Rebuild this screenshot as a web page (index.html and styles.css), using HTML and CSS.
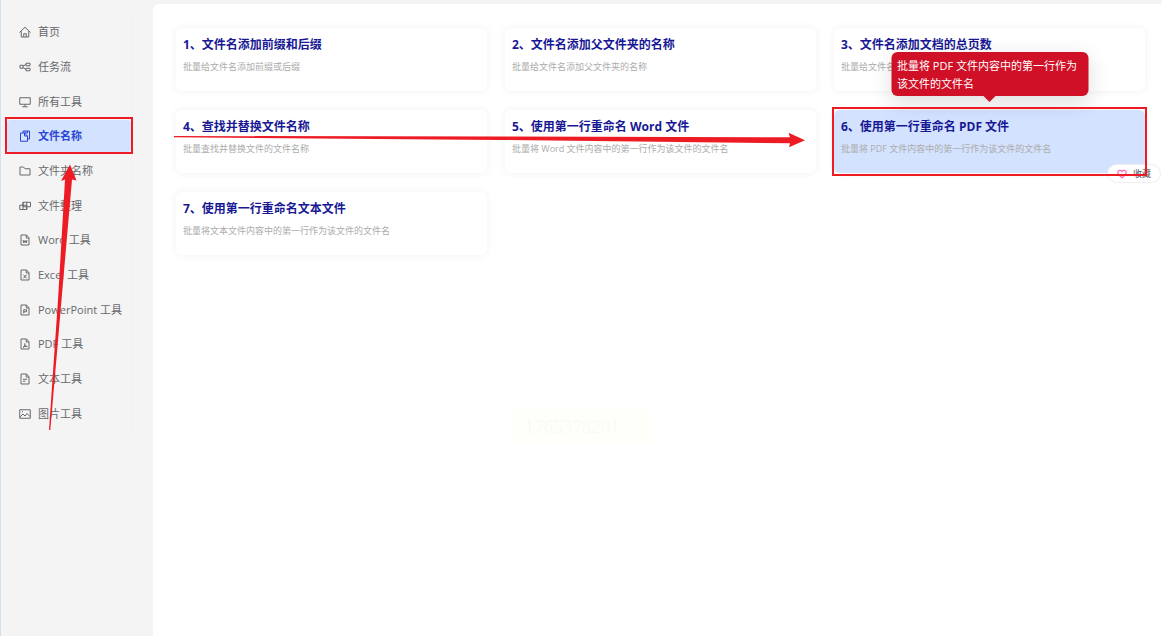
FILE: index.html
```html
<!DOCTYPE html>
<html lang="zh-CN">
<head>
  <meta charset="UTF-8">
  <meta name="viewport" content="width=device-width, initial-scale=1.0">
  <title>文件名称</title>
  <link rel="stylesheet" href="styles.css">
</head>
<body>
  <div class="app">
    <aside class="sidebar">
      <nav class="menu">
        <a class="menu-item" href="#"><span>
          <svg class="icon" viewBox="0 0 24 24"><path d="M1 13 12 2.500 23 13M4.500 10.500V22h15V10.500M9.500 22v-6.500h5V22"/></svg>首页</span></a>
        <a class="menu-item" href="#"><span>
          <svg class="icon" viewBox="0 0 24 24"><path d="M2 8.500h6v6H2zM14 4.500h8v5h-8zM14 14.500h8v5h-8zM8 10l6-3M8 13l6 4"/></svg>任务流</span></a>
        <a class="menu-item" href="#"><span>
          <svg class="icon" viewBox="0 0 24 24"><path d="M1.500 3.500h21v13h-21zM12 16.500V21M6.500 21.500h11"/></svg>所有工具</span></a>
        <a class="menu-item active" href="#"><span>
          <svg class="icon" viewBox="0 0 24 24"><path d="M8 6V2h13v16h-4M3 6h8l6 6v10.500H3zM11 6v6h6M12 2v4h5V2"/></svg>文件名称</span></a>
        <a class="menu-item" href="#"><span>
          <svg class="icon" viewBox="0 0 24 24"><path d="M2 4h7l3 3.500h10V20H2z"/></svg>文件夹名称</span></a>
        <a class="menu-item" href="#"><span>
          <svg class="icon" viewBox="0 0 24 24"><path d="M8 4.500h15v9H8zM15.500 4.500V19M1.500 10.500h14V19h-14zM8 4.500V19"/></svg>文件整理</span></a>
        <a class="menu-item" href="#"><span>
          <svg class="icon" viewBox="0 0 24 24"><path d="M4 2h11l5 5.500V22H4zM14.500 2v6H20M8 12l1.500 6 2.500-5 2.500 5 1.500-6"/></svg>Word 工具</span></a>
        <a class="menu-item" href="#"><span>
          <svg class="icon" viewBox="0 0 24 24"><path d="M4 2h11l5 5.500V22H4zM14.500 2v6H20M9 11.500l6 7M15 11.500l-6 7"/></svg>Excel 工具</span></a>
        <a class="menu-item" href="#"><span>
          <svg class="icon" viewBox="0 0 24 24"><path d="M4 2h11l5 5.500V22H4zM14.500 2v6H20M9.500 19v-7.500h5.500v4H9.500"/></svg>PowerPoint 工具</span></a>
        <a class="menu-item" href="#"><span>
          <svg class="icon" viewBox="0 0 24 24"><path d="M4 2h11l5 5.500V22H4zM14.500 2v6H20M11.500 10.500c1 4-1 7-3.500 8.500M11.500 13c1 3 2.500 4 5 4-3-.5-6 0-8 1.500"/></svg>PDF 工具</span></a>
        <a class="menu-item" href="#"><span>
          <svg class="icon" viewBox="0 0 24 24"><path d="M4 2h11l5 5.500V22H4zM14.500 2v6H20M8 12.500h8M8 16.500h4.500"/></svg>文本工具</span></a>
        <a class="menu-item" href="#"><span>
          <svg class="icon" viewBox="0 0 24 24"><path d="M1.500 3.500h21v17h-21zM2 18l6-6 4 4 4-5 6 6M6 7.500h2"/></svg>图片工具</span></a>
      </nav>
    </aside>

    <main class="content">
      <div class="cards">
        <section class="card">
          <h3>1、文件名添加前缀和后缀</h3>
          <p>批量给文件名添加前缀或后缀</p>
        </section>
        <section class="card">
          <h3>2、文件名添加父文件夹的名称</h3>
          <p>批量给文件名添加父文件夹的名称</p>
        </section>
        <section class="card">
          <h3>3、文件名添加文档的总页数</h3>
          <p>批量给文件名添加文档的总页数</p>
        </section>
        <section class="card">
          <h3>4、查找并替换文件名称</h3>
          <p>批量查找并替换文件的文件名称</p>
        </section>
        <section class="card">
          <h3>5、使用第一行重命名 Word 文件</h3>
          <p>批量将 Word 文件内容中的第一行作为该文件的文件名</p>
        </section>
        <section class="card selected">
          <h3>6、使用第一行重命名 PDF 文件</h3>
          <p>批量将 PDF 文件内容中的第一行作为该文件的文件名</p>
          <div class="tooltip" role="tooltip">批量将 PDF 文件内容中的第一行作为该文件的文件名</div>
          <button class="favorite" type="button">
            <svg class="heart" viewBox="0 0 24 24"><path d="M12 21C7 17 2 13 2 8.500 2 3 9 1.500 12 6c3-4.500 10-3 10 2.500C22 13 17 17 12 21z"/></svg>收藏
          </button>
        </section>
        <section class="card">
          <h3>7、使用第一行重命名文本文件</h3>
          <p>批量将文本文件内容中的第一行作为该文件的文件名</p>
        </section>
      </div>
    </main>
  </div>

  <div class="watermark">1765378201</div>

  <!-- guide arrows -->
  <svg class="arrows" width="830" height="440" viewBox="0 0 830 440">
    <path d="M174 136L500 136.500 790 137.300 788.500 132.700 805 140.300 789 147.300 790 143.200 500 140 174 137.300z"/>
    <path d="M49 430L58 300 65 179.500 61 181 70 164.500 76.500 180.500 72 179.500 61.500 300 50.300 430z"/>
  </svg>
</body>
</html>
```

FILE: styles.css
```css
* {
  box-sizing: border-box;
}
body {
  margin: 0;
  font-family: "Open Sans", "Noto Sans CJK SC", sans-serif;
  font-size: 11px;
  background-color: #f4f4f4;
}
.app {
  display: flex;
  min-height: 100vh;
  border-left: 1px solid #d3dfec;
}

/* left menu */
.sidebar {
  flex: 0 0 152px;
  padding: 15px 21px 0 4px;
}
.menu {
  display: grid;
  grid-auto-rows: 1fr;
  min-height: 416px;
  border-right: 1px solid #f0f0f0;
}
.menu-item {
  display: flex;
  align-items: center;
  position: relative;
  color: #66686c;
  text-decoration: none;
  line-height: 16px;
}
.menu-item span {
  display: flex;
  align-items: center;
  flex: 1;
  gap: 7px;
  margin-left: 2px;
  padding: 8px 0 8px 12px;
  border-radius: 4px;
}
.icon {
  width: 12px;
  height: 12px;
  fill: none;
  stroke: currentColor;
  stroke-width: 2;
}
.menu-item.active {
  color: #2b45d4;
  font-weight: bold;
}
.menu-item.active span {
  background-color: #d3e2fe;
}
.menu-item.active::after {
  content: "";
  position: absolute;
  inset: -2px -2px 0 0;
  border: 2px solid #ed1c24;
}

/* tool cards */
.content {
  flex: 1;
  margin-top: 4px;
  padding: 24px 17px 24px 23px;
  background-color: #fff;
  border-top-left-radius: 6px;
}
.cards {
  display: grid;
  grid-template-columns: repeat(3, 1fr);
  gap: 19px 18px;
}
.card {
  position: relative;
  padding: 8px 7px 16px;
  background-color: #fff;
  border-radius: 6px;
  box-shadow: 0 0 8px rgba(0, 0, 0, 0.06);
}
.card h3 {
  margin: 0 0 5px;
  color: #181894;
  font-size: 12px;
  line-height: 18px;
}
.card p {
  margin: 0;
  color: #acacac;
  font-size: 9px;
  line-height: 16px;
}
.card.selected {
  background-color: #d3e2fe;
}
.card.selected::after {
  content: "";
  position: absolute;
  inset: -3px -2px;
  border: 2px solid #ed1c24;
  pointer-events: none;
}
.tooltip {
  position: absolute;
  left: 50%;
  bottom: calc(100% + 14px);
  width: 197px;
  padding: 5px 6px 3px;
  transform: translateX(-50%);
  color: #fff;
  background-color: #cf1026;
  border-radius: 6px;
  box-shadow: 0 6px 22px rgba(0, 0, 0, 0.14);
  line-height: 18px;
}
.tooltip::after {
  content: "";
  position: absolute;
  top: 100%;
  left: 50%;
  margin-left: -6px;
  border: 6px solid transparent;
  border-top-color: #cf1026;
  border-bottom: 0;
}
.favorite {
  position: absolute;
  right: -16px;
  bottom: -10px;
  display: flex;
  align-items: center;
  gap: 6px;
  height: 19px;
  padding: 0 9px;
  color: #555;
  background-color: #fff;
  border: 1px solid #eee;
  border-radius: 10px;
  font-family: inherit;
  font-size: 9px;
  cursor: pointer;
}
.heart {
  width: 10px;
  height: 10px;
  fill: none;
  stroke: #f56cb0;
  stroke-width: 3;
}

.watermark {
  position: absolute;
  top: 409px;
  left: 50%;
  width: 137px;
  padding: 0 12px;
  transform: translateX(-50%);
  color: #fafaf5;
  background-color: #fffffa;
  font-family: "Liberation Serif", serif;
  font-size: 19px;
  line-height: 36px;
  height: 34px;
}
.arrows {
  position: absolute;
  top: 0;
  left: 0;
  fill: #ed1c24;
  pointer-events: none;
}
```
